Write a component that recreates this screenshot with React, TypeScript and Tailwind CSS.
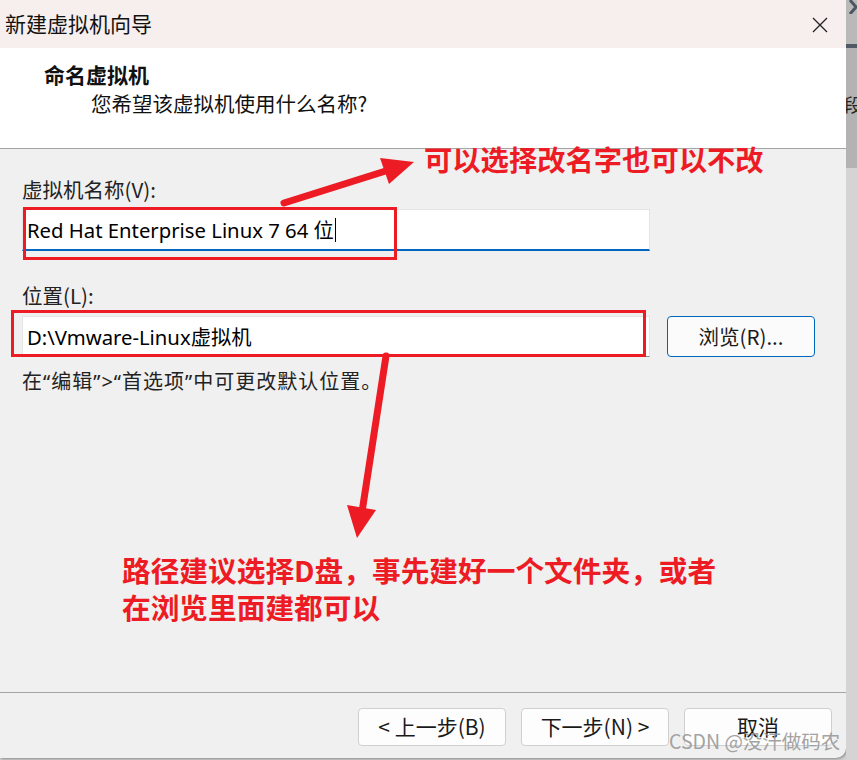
import React from 'react';

const cjk = { fontFamily: '"Noto Sans CJK SC", "Noto Sans", sans-serif' };
const ui = { fontFamily: '"Noto Sans", "Noto Sans CJK SC", sans-serif' };

function WizardButton({ children }: { children: React.ReactNode }) {
  return (
    <button
      className="w-[148px] h-[38px] rounded-[4px] border border-[#d0d0d0] bg-[#fdfdfd] text-[21px] text-[#1a1a1a] flex items-center justify-center"
      style={cjk}
    >
      {children}
    </button>
  );
}

const Q = ({ c }: { c: string }) => <span style={ui}>{c}</span>;

export default function App() {
  return (
    <div className="relative w-[857px] h-[760px] overflow-hidden bg-[#d2d2d2] flex">
      <div className="w-[846px] h-[758px] flex flex-col bg-[#f0f0f0] rounded-br-[10px] shadow-[1px_1px_3px_rgba(0,0,0,0.35)]">
        {/* title bar */}
        <div className="h-[48px] bg-[#f7eeee] flex items-center justify-between pl-[5px] pr-[18px]" style={cjk}>
          <span className="text-[21px] text-[#111]">新建虚拟机向导</span>
          <svg width="16" height="16" viewBox="0 0 16 16" className="mt-[1px]">
            <path d="M1 1 L15 15 M15 1 L1 15" stroke="#222" strokeWidth="1.3" fill="none" />
          </svg>
        </div>

        {/* header */}
        <div className="h-[101px] bg-white border-b border-[#a5a5a5] flex flex-col pt-[12px] pl-[44px]" style={cjk}>
          <div className="text-[21px] leading-[28px] font-bold text-[#111]">命名虚拟机</div>
          <div className="pl-[47px] mt-[1px] text-[20.5px] leading-[28px] text-[#111]">您希望该虚拟机使用什么名称?</div>
        </div>

        {/* body */}
        <div className="flex-1 flex flex-col px-[22px] pt-[28px]" style={cjk}>
          <div className="text-[20.5px] leading-[24px] text-[#222]">虚拟机名称(V):</div>
          <div className="mt-[8px] w-[628px] h-[42px] bg-white border border-[#e4e4e4] border-b-2 border-b-[#0067c0] flex items-center pl-[4px]">
            <span className="text-[20.3px] text-black" style={ui}>
              Red Hat Enterprise Linux 7 64 <span style={cjk}>位</span>
            </span>
            <span className="w-px h-[24px] bg-black ml-px" />
          </div>

          <div className="mt-[32px] text-[20.5px] leading-[24px] text-[#222]">位置(L):</div>
          <div className="mt-[9px] flex items-center gap-[17px]">
            <div className="w-[628px] h-[41px] bg-white border border-[#e4e4e4] border-b-[#8a8a8a] flex items-center pl-[4px]">
              <span className="text-[20.3px] text-black" style={ui}>
                D:\Vmware-Linux<span style={cjk}>虚拟机</span>
              </span>
            </div>
            <button className="w-[148px] h-[41px] rounded-[4px] border border-[#0067c0] bg-[#fbfbfb] text-[20.5px] text-[#1a1a1a] flex items-center justify-center">
              浏览(R)...
            </button>
          </div>

          <div className="mt-[12px] text-[20px] leading-[24px] tracking-[1px] text-[#222]">
            在<Q c="“" />编辑<Q c="”" /><Q c=">" /><Q c="“" />首选项<Q c="”" />中可更改默认位置。
          </div>
        </div>

        {/* footer */}
        <div className="h-[66px] border-t border-[#a5a5a5] flex justify-end gap-[15px] pr-[14px] pt-[15px]">
          <WizardButton>&lt; 上一步(B)</WizardButton>
          <WizardButton>下一步(N) &gt;</WizardButton>
          <WizardButton>取消</WizardButton>
        </div>
      </div>

      {/* background window strip on the right */}
      <div className="w-[11px] flex flex-col overflow-hidden">
        <div className="h-[44px] bg-[#b9b9b9] flex items-start justify-end">
          <svg width="9" height="14" viewBox="0 0 9 14">
            <path d="M2 0 L8 7 L2 14" stroke="#4b5863" strokeWidth="3" fill="none" />
          </svg>
        </div>
        <div className="h-[4px] bg-[#4f5a64]" />
        <div className="h-[120px] bg-[#b3b3b3] flex flex-col pt-[46px]">
          <span className="text-[18px] leading-[20px] text-[#222] -ml-[2px]" style={cjk}>段</span>
        </div>
        <div className="flex-1 bg-[#d4d4d4]" />
      </div>

      {/* annotation boxes */}
      <div className="absolute left-[23px] top-[207px] w-[374px] h-[53px] border-[3px] border-[#ed1c24]" />
      <div className="absolute left-[11px] top-[310px] w-[635px] h-[47px] border-[3px] border-[#ed1c24]" />

      {/* annotation arrows */}
      <svg className="absolute left-0 top-0" width="857" height="760" viewBox="0 0 857 760">
        <line x1="284" y1="203" x2="392" y2="169" stroke="#ed1c24" strokeWidth="7" strokeLinecap="round" />
        <polygon points="414,162 380,158 389,184" fill="#ed1c24" />
        <line x1="386" y1="356" x2="362" y2="512" stroke="#ed1c24" strokeWidth="7" strokeLinecap="round" />
        <polygon points="357,538 347,505 376,510" fill="#ed1c24" />
      </svg>

      {/* annotation texts */}
      <div className="absolute left-[424px] top-[142px] text-[28.3px] leading-[34px] font-bold text-[#ed1c24]" style={cjk}>
        可以选择改名字也可以不改
      </div>
      <div className="absolute left-[122px] top-[551px] text-[28.7px] leading-[37px] font-bold text-[#ed1c24]" style={cjk}>
        <div>路径建议选择D盘，事先建好一个文件夹，或者</div>
        <div>在浏览里面建都可以</div>
      </div>

      {/* watermark */}
      <div className="absolute left-[669px] top-[726px] text-[19.5px] text-[#9a9a9a] opacity-90" style={cjk}>
        CSDN @没汗做码农
      </div>
    </div>
  );
}
